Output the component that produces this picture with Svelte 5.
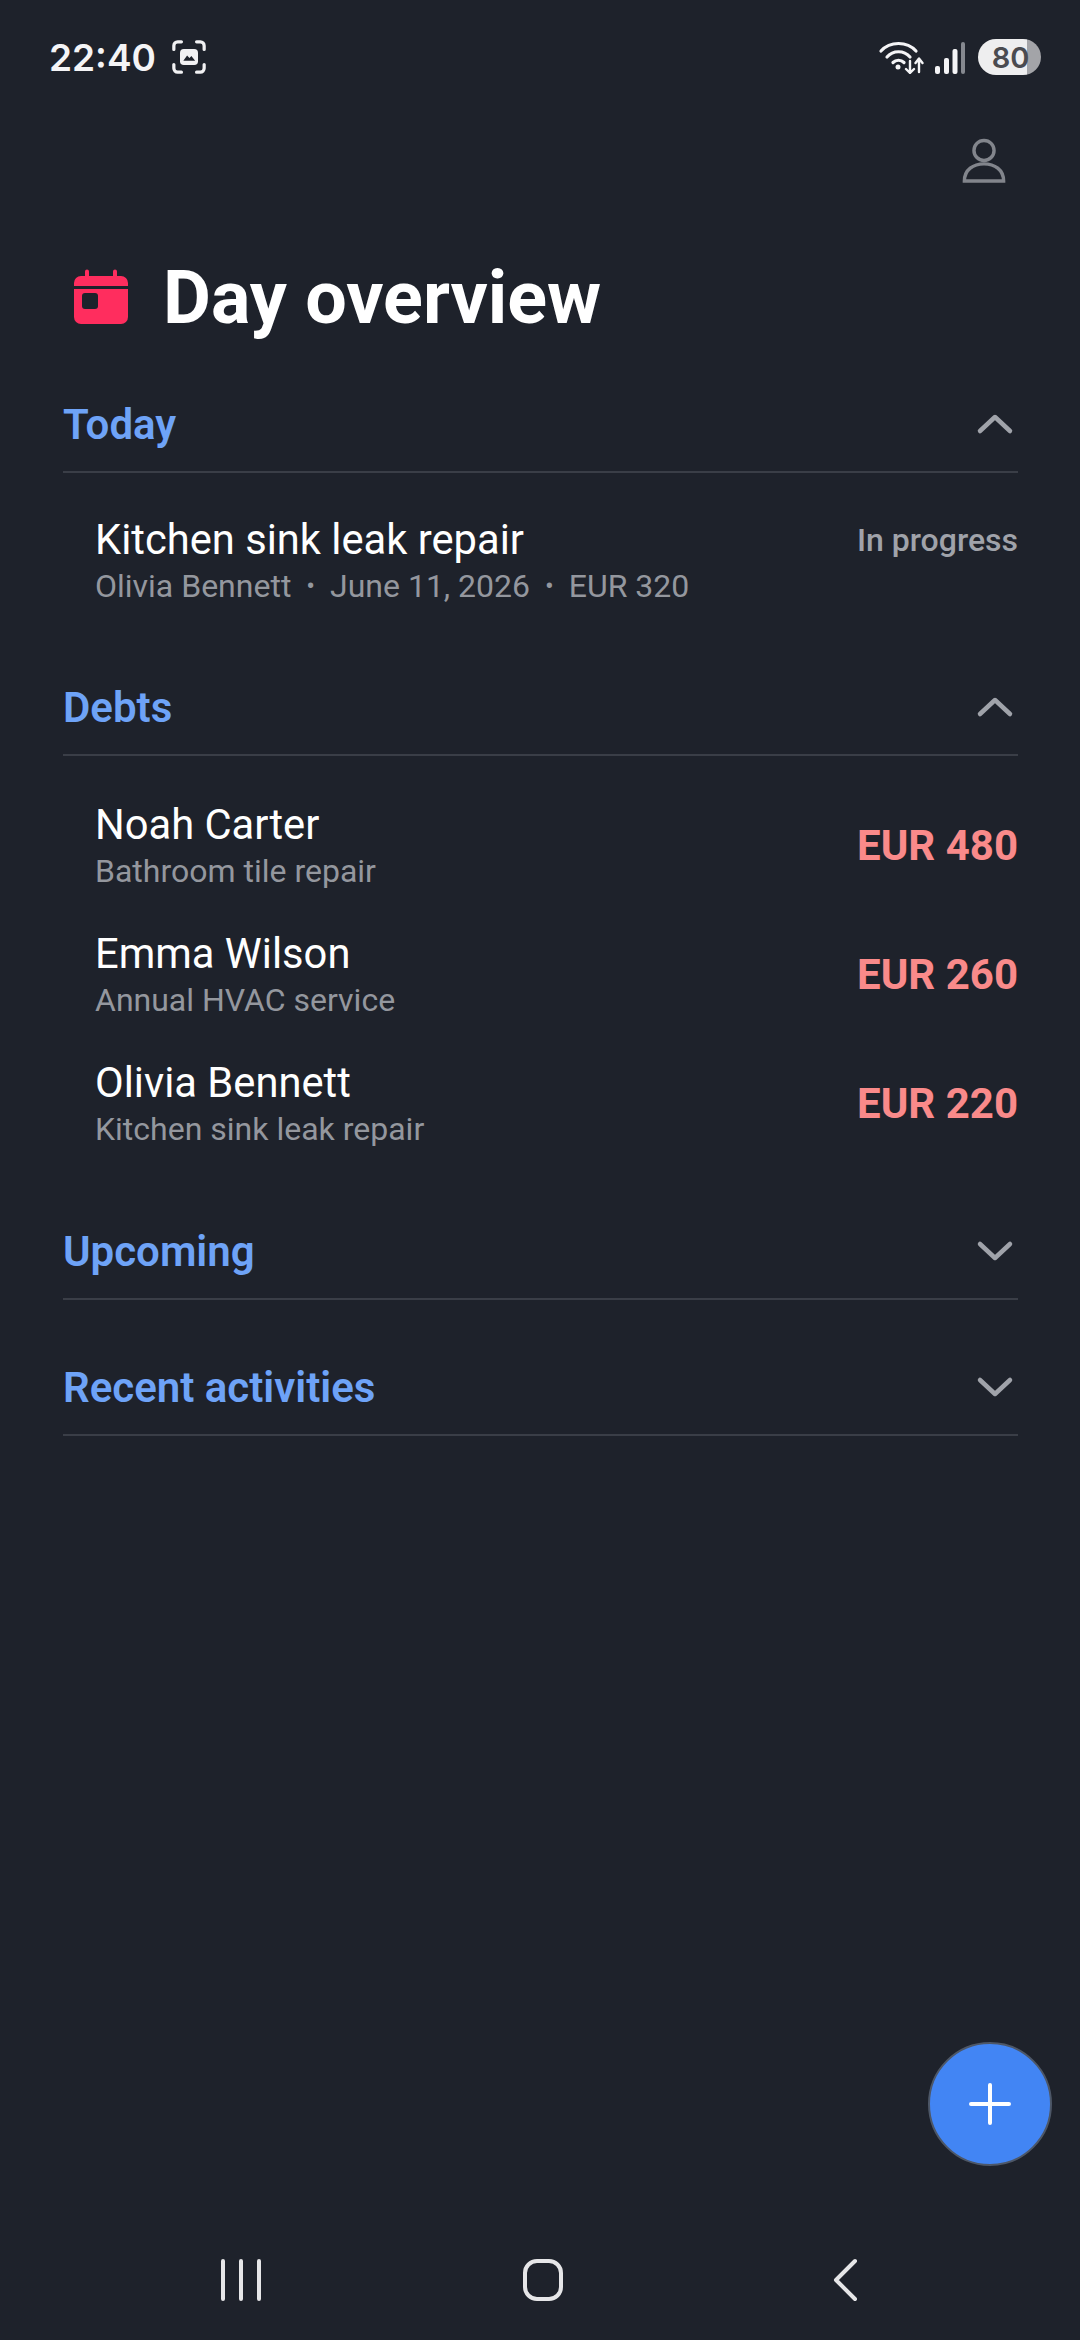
<script>
  const debts = [
    { name: "Noah Carter", job: "Bathroom tile repair", amount: "EUR 480" },
    { name: "Emma Wilson", job: "Annual HVAC service", amount: "EUR 260" },
    { name: "Olivia Bennett", job: "Kitchen sink leak repair", amount: "EUR 220" },
  ];
</script>

{#snippet chevron(up)}
  <svg class="chevron" width="40" height="24" viewBox="0 0 40 24">
    <path d={up ? "M5 20 L20 6 L35 20" : "M5 6 L20 20 L35 6"} />
  </svg>
{/snippet}

<div class="screen">
  <div class="status">
    <div class="status-left">
      <span class="time">22:40</span>
      <svg width="36" height="36" viewBox="0 0 38 38" class="shot">
        <path class="corners" d="M3 11 V7 a4 4 0 0 1 4 -4 H11 M27 3 H31 a4 4 0 0 1 4 4 V11 M35 27 V31 a4 4 0 0 1 -4 4 H27 M11 35 H7 a4 4 0 0 1 -4 -4 V27" />
        <rect x="9.5" y="10.5" width="19" height="17" rx="4" fill="#f1f1f3" />
        <path d="M13 23 L17 17.5 L19.5 20 L21.5 18 L25.5 23 Z" fill="#1e222b" />
      </svg>
    </div>
    <div class="status-right">
      <svg width="46" height="34" viewBox="0 0 46 34" class="wifi">
        <g fill="none" stroke="#f4f4f6" stroke-width="3.2" stroke-linecap="round">
          <path d="M3 11 C12 1 29 1 38 11" />
          <path d="M9 17 C15 10 26 10 32 17" />
          <path d="M15 22.5 C18 19.5 23 19.5 26 22.5" />
        </g>
        <circle cx="20" cy="27" r="2.5" fill="#f4f4f6" />
        <path d="M32 21 V33 M28 29 L32 33 L36 29 M41 32 V19 M37.5 23 L41 18.5 L44.5 23" fill="none" stroke="#f4f4f6" stroke-width="2.4" stroke-linecap="round" stroke-linejoin="round" />
      </svg>
      <svg width="31" height="34" viewBox="0 0 31 34" class="signal">
        <rect x="1" y="26" width="5" height="8" rx="2" fill="#f4f4f6" />
        <rect x="10" y="18" width="5" height="16" rx="2" fill="#f4f4f6" />
        <rect x="18.5" y="9" width="5" height="25" rx="2" fill="#f4f4f6" />
        <rect x="27" y="2" width="4" height="32" rx="2" fill="#85888f" />
      </svg>
      <div class="battery"><span>80</span></div>
    </div>
  </div>

  <div class="profile-row">
    <svg width="44" height="46" viewBox="0 0 46 48">
      <circle cx="23" cy="13" r="10.5" />
      <path d="M2.5 45 C2.5 33 12 27 23 27 C34 27 43.5 33 43.5 45 Z" />
    </svg>
  </div>

  <h1 class="title">
    <svg width="58" height="58" viewBox="0 0 58 58">
      <path d="M2 15 a7 7 0 0 1 7 -7 H13 V3.5 a2 2 0 0 1 4 0 V8 H41 V3.5 a2 2 0 0 1 4 0 V8 H49 a7 7 0 0 1 7 7 V18 H2 Z" fill="#ff2d5e" />
      <path d="M2 21 H56 V49 a7 7 0 0 1 -7 7 H9 a7 7 0 0 1 -7 -7 Z" fill="#ff2d5e" />
      <rect x="10" y="25" width="16" height="16" rx="3" fill="#1e222b" />
    </svg>
    Day overview
  </h1>

  <section class="first">
    <div class="head">
      <span>Today</span>
      {@render chevron(true)}
    </div>
    <div class="items">
      <div class="item">
        <div>
          <div class="name">Kitchen sink leak repair</div>
          <div class="sub">Olivia Bennett <i>•</i> June 11, 2026 <i>•</i> EUR 320</div>
        </div>
        <div class="state">In progress</div>
      </div>
    </div>
  </section>

  <section>
    <div class="head">
      <span>Debts</span>
      {@render chevron(true)}
    </div>
    <div class="debts">
      {#each debts as debt}
        <div class="item debt">
          <div>
            <div class="name">{debt.name}</div>
            <div class="sub">{debt.job}</div>
          </div>
          <div class="amount">{debt.amount}</div>
        </div>
      {/each}
    </div>
  </section>

  <section>
    <div class="head">
      <span>Upcoming</span>
      {@render chevron(false)}
    </div>
  </section>

  <section class="closed">
    <div class="head">
      <span>Recent activities</span>
      {@render chevron(false)}
    </div>
  </section>

  <button class="fab" aria-label="Add">
    <svg width="42" height="42" viewBox="0 0 42 42">
      <path d="M21 2 V40 M2 21 H40" />
    </svg>
  </button>

  <nav class="nav">
    <svg width="44" height="44" viewBox="0 0 44 44">
      <path d="M4 3 V41 M22 3 V41 M40 3 V41" />
    </svg>
    <svg width="42" height="44" viewBox="0 0 42 44">
      <rect x="3" y="3" width="36" height="38" rx="12" />
    </svg>
    <svg width="30" height="44" viewBox="0 0 30 44">
      <path d="M25 3 L6 22 L25 41" />
    </svg>
  </nav>
</div>

<style>
  :global(body) {
    margin: 0;
    background: #1e222b;
  }

  .screen {
    position: relative;
    width: 1080px;
    height: 2340px;
    background: #1e222b;
    font-family: Roboto, sans-serif;
    color: #fff;
    overflow: hidden;
  }

  .status {
    height: 114px;
    box-sizing: border-box;
    padding: 0 39px 0 49px;
    display: flex;
    align-items: center;
    justify-content: space-between;
  }

  .status-left {
    display: flex;
    align-items: center;
    gap: 15px;
  }

  .time {
    font-family: Inter, sans-serif;
    font-size: 37px;
    font-weight: 600;
    color: #f4f4f6;
  }

  .corners {
    fill: none;
    stroke: #f1f1f3;
    stroke-width: 3.4;
    stroke-linecap: round;
  }

  .status-right {
    display: flex;
    align-items: center;
  }

  .signal {
    margin-left: 10px;
  }

  .battery {
    margin-left: 13px;
    width: 63px;
    height: 36px;
    border-radius: 18px;
    background: linear-gradient(to right, #eeeeef 49px, #a3a4a8 49px);
    display: flex;
    align-items: center;
    justify-content: center;
    font-family: Inter, sans-serif;
    font-size: 29px;
    font-weight: 600;
    color: #4a4b50;
  }

  .battery span {
    padding-left: 2px;
  }

  .profile-row {
    display: flex;
    justify-content: flex-end;
    padding-right: 74px;
    height: 46px;
    margin-top: 24px;
  }

  .profile-row svg {
    fill: none;
    stroke: #82858c;
    stroke-width: 3.6;
  }

  .title {
    margin: 72px 0 0;
    padding-left: 72px;
    display: flex;
    align-items: center;
    gap: 33px;
    font-size: 73.7px;
    font-weight: 700;
    line-height: 84px;
  }

  .title svg {
    margin-top: -2px;
  }

  section {
    margin: 0 62px 0 63px;
  }

  .first {
    margin-top: 37px;
  }

  .closed {
    margin-top: 40px;
  }

  .head {
    height: 94px;
    border-bottom: 2px solid #3a3e47;
    display: flex;
    align-items: center;
    justify-content: space-between;
    font-size: 42px;
    font-weight: 600;
    color: #6ea3f7;
  }

  .chevron {
    margin-right: 3px;
    margin-top: -2px;
  }

  .chevron path {
    fill: none;
    stroke: #a0a3aa;
    stroke-width: 4.5;
    stroke-linecap: round;
    stroke-linejoin: round;
  }

  .items {
    padding: 42px 0 53px;
  }

  .debts {
    padding: 25px 0 36px;
  }

  .item {
    display: flex;
    justify-content: space-between;
    padding-left: 32px;
  }

  .debt {
    align-items: center;
    height: 129px;
  }

  .name {
    font-size: 41.7px;
    line-height: 50px;
    color: #fff;
  }

  .sub {
    font-size: 32px;
    line-height: 42px;
    color: #94979e;
  }

  .sub i {
    font-style: normal;
    font-size: 26px;
    margin: 0 7px;
    vertical-align: 2px;
  }

  .state {
    font-size: 32px;
    font-weight: 500;
    line-height: 50px;
    color: #a0a3aa;
  }

  .amount {
    font-size: 42px;
    font-weight: 700;
    color: #f98a8a;
  }

  .fab {
    position: absolute;
    left: 928px;
    top: 2042px;
    width: 124px;
    height: 124px;
    padding: 0;
    box-sizing: border-box;
    border-radius: 50%;
    border: 2px solid #4d5767;
    background: #4285f4;
    display: flex;
    align-items: center;
    justify-content: center;
  }

  .fab path {
    stroke: #fff;
    stroke-width: 4;
    stroke-linecap: round;
    fill: none;
  }

  .nav {
    position: absolute;
    left: 0;
    right: 0;
    top: 2258px;
    height: 44px;
  }

  .nav svg {
    position: absolute;
    top: 0;
    fill: none;
    stroke: #e6e6e8;
    stroke-width: 4;
    stroke-linecap: round;
    stroke-linejoin: round;
  }

  .nav svg:nth-child(1) {
    left: 219px;
  }

  .nav svg:nth-child(2) {
    left: 522px;
  }

  .nav svg:nth-child(3) {
    left: 830px;
  }
</style>
